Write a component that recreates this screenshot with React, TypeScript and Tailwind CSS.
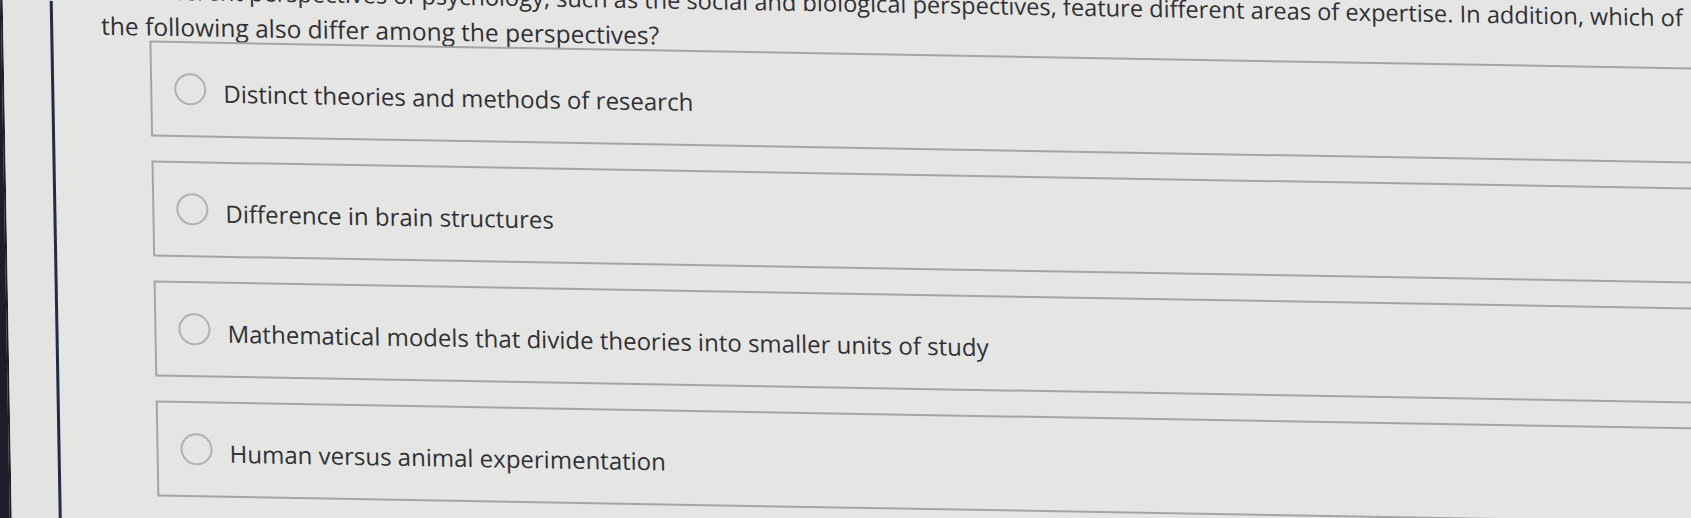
const options = [
  'Distinct theories and methods of research',
  'Difference in brain structures',
  'Mathematical models that divide theories into smaller units of study',
  'Human versus animal experimentation',
];

function Option({ text }: { text: string }) {
  return (
    <div className="flex h-[96px] items-center border-2 border-[#a3a5a5] pl-[22px]">
      <span className="h-[32px] w-[32px] shrink-0 rounded-full border-2 border-[#b0b1b1]" />
      <span className="ml-[17px] pt-[7px] text-[24px] text-[#303035]">{text}</span>
    </div>
  );
}

export default function App() {
  return (
    <div className="h-[518px] w-full overflow-hidden bg-[#1f1b27] font-['Open_Sans',sans-serif]">
      {/* photo is slightly tilted, so the whole sheet gets a small skew */}
      <div className="-mt-[40px] flex h-[620px] w-[1800px] origin-top-left skew-x-1 skew-y-1 bg-[#e5e6e3] pt-[40px]">
        <div className="w-[2px] bg-[#1f1b27]" />
        <div className="w-[50px] border-r-[3px] border-[#262b45] bg-[#e3e3e1]" />

        <main className="flex-1 pl-[48px]">
          {/* Question */}
          <div className="-mt-[30px] leading-[36px] text-[#303035]">
            <p className="whitespace-nowrap text-[23.6px]">
              The different perspectives of psychology, such as the social and biological perspectives, feature
              different areas of expertise. In addition, which of
            </p>
            <p className="whitespace-nowrap text-[24.5px]">the following also differ among the perspectives?</p>
          </div>

          {/* Answers */}
          <div className="-mt-[4px] ml-[48px] flex flex-col gap-[24px]">
            {options.map((o) => (
              <Option key={o} text={o} />
            ))}
          </div>
        </main>
      </div>
    </div>
  );
}
